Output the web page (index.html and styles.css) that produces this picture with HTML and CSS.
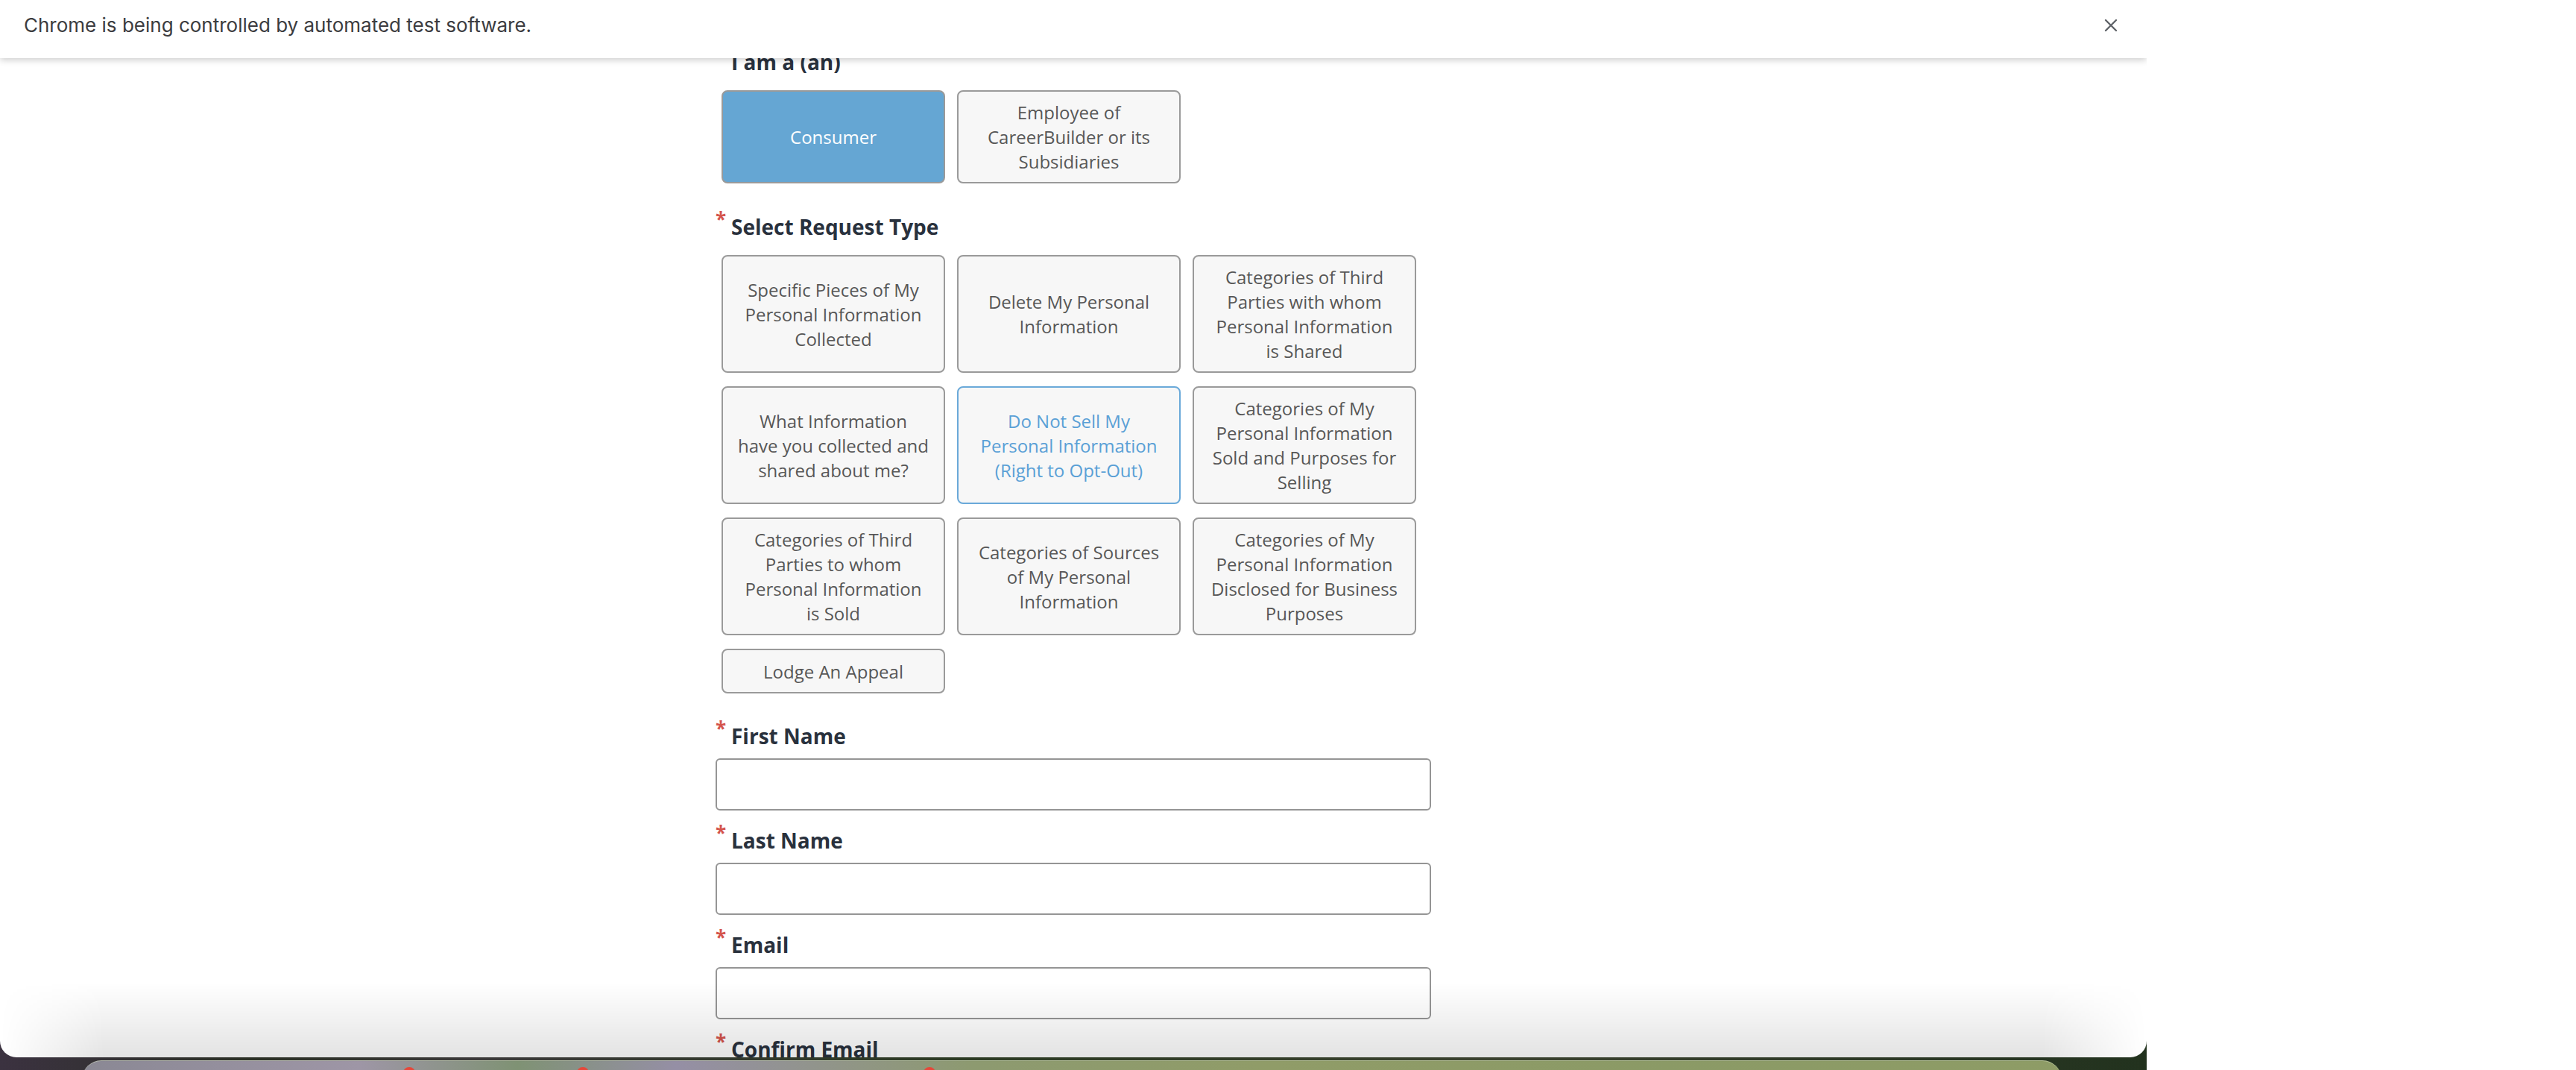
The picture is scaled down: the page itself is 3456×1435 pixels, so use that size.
FILE: index.html
```html
<!DOCTYPE html>
<html lang="en">
<head>
<meta charset="utf-8">
<title>Privacy Request</title>
<link rel="stylesheet" href="styles.css">
</head>
<body>
<div class="screen">
  <div class="window">
    <div class="infobar">
      <span class="infobar-text">Chrome is being controlled by automated test software.</span>
      <svg class="close" viewBox="0 0 18 18" aria-hidden="true"><path d="M2 2L16 16M16 2L2 16"/></svg>
    </div>
    <div class="viewport">
      <form class="form">
        <div class="label"><span class="req">*</span>I am a (an)</div>
        <div class="choices who">
          <div class="opt short selected"><span>Consumer</span></div>
          <div class="opt short"><span>Employee of<br>CareerBuilder or its<br>Subsidiaries</span></div>
        </div>

        <div class="label"><span class="req">*</span>Select Request Type</div>
        <div class="choices">
          <div class="opt"><span>Specific Pieces of My<br>Personal Information<br>Collected</span></div>
          <div class="opt"><span>Delete My Personal<br>Information</span></div>
          <div class="opt"><span>Categories of Third<br>Parties with whom<br>Personal Information<br>is Shared</span></div>
          <div class="opt"><span>What Information<br>have you collected and<br>shared about me?</span></div>
          <div class="opt active"><span>Do Not Sell My<br>Personal Information<br>(Right to Opt-Out)</span></div>
          <div class="opt"><span>Categories of My<br>Personal Information<br>Sold and Purposes for<br>Selling</span></div>
          <div class="opt"><span>Categories of Third<br>Parties to whom<br>Personal Information<br>is Sold</span></div>
          <div class="opt"><span>Categories of Sources<br>of My Personal<br>Information</span></div>
          <div class="opt"><span>Categories of My<br>Personal Information<br>Disclosed for Business<br>Purposes</span></div>
          <div class="opt single"><span>Lodge An Appeal</span></div>
        </div>

        <div class="label"><span class="req">*</span>First Name</div>
        <input class="input" type="text">
        <div class="label"><span class="req">*</span>Last Name</div>
        <input class="input" type="text">
        <div class="label"><span class="req">*</span>Email</div>
        <input class="input" type="text">
        <div class="label"><span class="req">*</span>Confirm Email</div>
        <input class="input" type="text">
      </form>
    </div>
    <div class="shade"></div>
  </div>
  <div class="desk">
    <div class="dock">
      <span class="badge b1"></span>
      <span class="badge b2"></span>
      <span class="badge b3"></span>
    </div>
  </div>
</div>
</body>
</html>
```

FILE: styles.css
```css
html, body {
  margin: 0;
  padding: 0;
  background: #ffffff;
}
body {
  width: 3456px;
  height: 1435px;
  overflow: hidden;
}
.screen {
  width: 2880px;
  height: 1435px;
  display: flex;
  flex-direction: column;
  background: linear-gradient(90deg, #3b3240 0%, #2a2f24 12%, #3a3838 22%, #2b3a22 45%, #3a412e 70%, #22321e 100%);
}
.window {
  height: 1418px;
  flex: none;
  background: #ffffff;
  border-radius: 0 0 22px 22px;
  overflow: hidden;
  display: flex;
  flex-direction: column;
  position: relative;
}
.infobar {
  height: 78px;
  flex: none;
  box-sizing: border-box;
  padding: 19px 39px 0 32px;
  display: flex;
  justify-content: space-between;
  align-items: flex-start;
  background: #ffffff;
  box-shadow: 0 2px 9px rgba(0, 0, 0, 0.22);
  position: relative;
  z-index: 2;
}
.infobar-text {
  font-family: Inter, Roboto, "Liberation Sans", sans-serif;
  font-size: 26px;
  line-height: 30px;
  color: #3c3c40;
}
.close {
  width: 18px;
  height: 18px;
  margin-top: 6px;
  fill: none;
  stroke: #5f6368;
  stroke-width: 2.4;
  stroke-linecap: round;
}
.viewport {
  flex: 1;
  overflow: hidden;
}
.form {
  width: 960px;
  margin: -14px 0 0 960px;
  font-family: "Open Sans", "Liberation Sans", sans-serif;
}
.label {
  display: flex;
  font-size: 28px;
  line-height: 38px;
  font-weight: 700;
  color: #29313d;
  margin-bottom: 11px;
}
.req {
  width: 21px;
  flex: none;
  color: #d4544c;
  font-size: 26px;
  line-height: 24px;
  font-weight: 700;
  margin-top: -3px;
}
.choices {
  display: grid;
  grid-template-columns: repeat(3, 300px);
  column-gap: 16px;
  row-gap: 18px;
  align-items: start;
  margin: 19px 0 38px 8px;
}
.choices.who {
  margin-bottom: 39px;
}
.opt {
  box-sizing: border-box;
  height: 158px;
  border: 2px solid #9a9a9a;
  border-radius: 8px;
  background: #f7f7f7;
  color: #575757;
  font-size: 24px;
  line-height: 33px;
  display: flex;
  align-items: center;
  justify-content: center;
  text-align: center;
}
.opt.short {
  height: 125px;
}
.opt.single {
  height: 60px;
}
.opt.selected {
  background: #65a6d3;
  color: #ffffff;
}
.opt.active {
  border-color: #6aa9d9;
  color: #5aa0d6;
}
.input {
  display: block;
  width: 960px;
  height: 70px;
  box-sizing: border-box;
  margin: 0 0 21px 0;
  border: 2px solid #959595;
  border-radius: 6px;
  background: #ffffff;
  font: 24px "Open Sans", sans-serif;
}
.shade {
  position: absolute;
  left: 0;
  right: 0;
  bottom: 0;
  height: 100px;
  background: linear-gradient(rgba(0, 0, 0, 0), rgba(0, 0, 0, 0.11));
  -webkit-mask-image: linear-gradient(90deg, transparent, #000 140px, #000 calc(100% - 140px), transparent);
  mask-image: linear-gradient(90deg, transparent, #000 140px, #000 calc(100% - 140px), transparent);
  pointer-events: none;
  z-index: 3;
}
.desk {
  flex: 1;
  padding: 4px 0 0 110px;
  overflow: hidden;
}
.dock {
  width: 2656px;
  height: 40px;
  border-radius: 26px 26px 0 0;
  border-top: 1px solid rgba(220, 230, 200, 0.5);
  background: linear-gradient(90deg, #8a8894 0%, #9e96a6 14%, #7f9274 22%, #958fa5 30%, #8d9a70 45%, #909c68 60%, #8b9a66 80%, #8e9c66 100%);
  position: relative;
}
.badge {
  position: absolute;
  top: 8px;
  width: 16px;
  height: 16px;
  border-radius: 50%;
  background: #e5483b;
}
.b1 { left: 431px; }
.b2 { left: 664px; }
.b3 { left: 1129px; }
```
